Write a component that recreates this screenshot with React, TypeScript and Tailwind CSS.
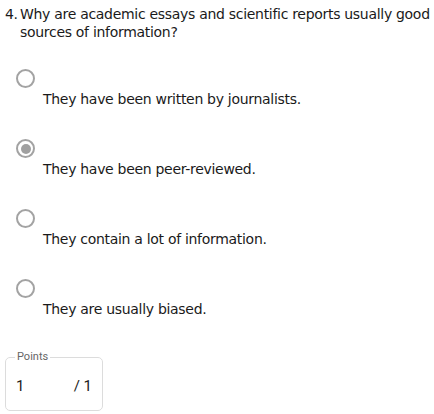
import React from "react";

const options = [
  { text: "They have been written by journalists.", selected: false },
  { text: "They have been peer-reviewed.", selected: true },
  { text: "They contain a lot of information.", selected: false },
  { text: "They are usually biased.", selected: false },
];

export default function App() {
  return (
    <div className="w-[434px] h-[414px] bg-white text-[#1a1a1a] overflow-hidden" style={{ fontFamily: '"DejaVu Sans", Verdana, sans-serif' }}>
      <div className="flex pt-[5px] pl-[5px] text-[14px] leading-[18px] tracking-[-0.3px]">
        <span className="w-[15px] shrink-0">4.</span>
        <span>Why are academic essays and scientific reports usually good sources of information?</span>
      </div>
      <div className="mt-[28px] flex flex-col gap-[31px]">
        {options.map((o) => (
          <div key={o.text} className="flex flex-col">
            <div className="ml-[16px] w-[19px] h-[19px] rounded-full border-2 border-[#a3a3a3] flex items-center justify-center">
              {o.selected && <div className="w-[10px] h-[10px] rounded-full bg-[#a0a0a0]" />}
            </div>
            <div className="pl-[43px] mt-[2px] text-[14px] leading-[18px] tracking-[-0.3px]">{o.text}</div>
          </div>
        ))}
      </div>
      <fieldset className="ml-[5px] mt-[33px] w-[98px] h-[60px] border border-[#dcdcdc] rounded-[5px] px-[9px]" style={{ fontFamily: 'Roboto, sans-serif' }}>
        <legend className="px-[2px] text-[11px] leading-[12px] text-[#666]">Points</legend>
        <div className="flex justify-between items-center pt-[12px] text-[15px] text-[#222]">
          <span className="pl-[1px]">1</span>
          <span className="pr-[1px]">/ 1</span>
        </div>
      </fieldset>
    </div>
  );
}
